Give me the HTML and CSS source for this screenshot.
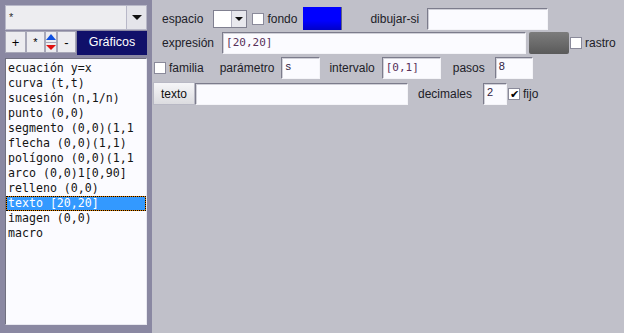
FILE: index.html
```html
<!DOCTYPE html>
<html lang="es">
<head>
    <meta charset="UTF-8">
    <title>Gráficos</title>
    <link rel="stylesheet" href="styles.css">
</head>
<body>
    <div class="app">
        <aside class="side">
            <div class="combo">
                <div class="combo-value">*</div>
                <div class="combo-arrow"><span class="tri-down"></span></div>
            </div>
            <div class="tools">
                <button class="tool">+</button>
                <button class="tool tool-star">*</button>
                <div class="updown">
                    <span class="ud"><span class="tri-up"></span></span>
                    <span class="ud"><span class="tri-down red"></span></span>
                </div>
                <button class="tool tool-minus">-</button>
                <div class="tab">Gráficos</div>
            </div>
            <ul class="list">
                <li>ecuación y=x</li>
                <li>curva (t,t)</li>
                <li>sucesión (n,1/n)</li>
                <li>punto (0,0)</li>
                <li>segmento (0,0)(1,1</li>
                <li>flecha (0,0)(1,1)</li>
                <li>polígono (0,0)(1,1</li>
                <li>arco (0,0)1[0,90]</li>
                <li>relleno (0,0)</li>
                <li class="selected">texto [20,20]</li>
                <li>imagen (0,0)</li>
                <li>macro</li>
            </ul>
        </aside>
        <main class="main">
            <div class="row row1">
                <span class="lbl lbl-first">espacio</span>
                <div class="mini-combo">
                    <span class="mini-field"></span>
                    <span class="mini-arrow"><span class="tri-down small"></span></span>
                </div>
                <span class="check ck-fondo"></span>
                <span class="lbl lbl-tight">fondo</span>
                <span class="swatch"></span>
                <span class="lbl lbl-dibujar">dibujar-si</span>
                <input class="field f-dibujar" type="text">
            </div>
            <div class="row row2">
                <span class="lbl lbl-first">expresión</span>
                <div class="field f-expr mono">[20,20]</div>
                <span class="graybox"></span>
                <span class="check ck-rastro"></span>
                <span class="lbl lbl-tight">rastro</span>
            </div>
            <div class="row row3">
                <span class="check ck-familia"></span>
                <span class="lbl lbl-tight">familia</span>
                <span class="lbl lbl-param">parámetro</span>
                <div class="field f-param small-txt">s</div>
                <span class="lbl lbl-interv">intervalo</span>
                <div class="field f-interv mono">[0,1]</div>
                <span class="lbl lbl-pasos">pasos</span>
                <div class="field f-pasos small-txt">8</div>
            </div>
            <div class="row row4">
                <button class="btn-texto">texto</button>
                <input class="field f-texto" type="text">
                <span class="lbl lbl-dec">decimales</span>
                <div class="field f-dec small-txt">2</div>
                <span class="check checked ck-fijo">&#10004;</span>
                <span class="lbl lbl-tight">fijo</span>
            </div>
        </main>
    </div>
</body>
</html>
```

FILE: styles.css
```css
body {
    margin: 0;
    padding: 0;
    font-family: "Liberation Sans", Arial, sans-serif;
    font-size: 12px;
    color: #202028;
}
.app {
    display: flex;
    width: 624px;
    height: 333px;
    overflow: hidden;
}
.side {
    width: 142px;
    padding: 5px 5px 0 5px;
    background: #8a88a2;
}
.main {
    flex: 1;
    background: #c0c0c9;
    padding: 7px 0 0 1px;
}

/* left column */
.combo {
    display: flex;
    height: 25px;
}
.combo-value {
    flex: 1;
    background: #ededf0;
    border: 1px solid #b8b8c8;
    font-size: 11px;
    padding: 5px 0 0 3px;
    color: #303030;
}
.combo-arrow {
    width: 19px;
    background: #e4e4ea;
    border: 1px solid #b8b8c8;
    border-left: none;
    display: flex;
    align-items: center;
    justify-content: center;
}
.tri-down {
    width: 0;
    height: 0;
    border-left: 5px solid transparent;
    border-right: 5px solid transparent;
    border-top: 5px solid #101010;
}
.tri-down.small {
    border-left-width: 4px;
    border-right-width: 4px;
    border-top-width: 4px;
}
.tri-down.red {
    border-top-color: #e01010;
}
.tri-up {
    width: 0;
    height: 0;
    border-left: 5px solid transparent;
    border-right: 5px solid transparent;
    border-bottom: 6px solid #1050e0;
}
.tools {
    display: flex;
    margin-top: 1px;
    height: 24px;
}
.tool {
    width: 21px;
    height: 22px;
    padding: 0;
    margin: 0;
    background: #ececf0;
    border: 1px solid #a8a8b8;
    font-family: "Liberation Sans", Arial, sans-serif;
    font-size: 13px;
    color: #000;
}
.tool-star {
    width: 19px;
    font-size: 11px;
}
.tool-minus {
    width: 19px;
}
.updown {
    width: 12px;
    height: 22px;
    display: flex;
    flex-direction: column;
}
.ud {
    flex: 1;
    background: #ececf0;
    border: 1px solid #a8a8b8;
    display: flex;
    align-items: center;
    justify-content: center;
}
.ud + .ud {
    border-top: none;
}
.tab {
    flex: 1;
    margin-left: 1px;
    background: #10106a;
    color: #fff;
    font-size: 12.5px;
    text-align: center;
    line-height: 22px;
}
.list {
    list-style: none;
    margin: 3px 0 0 0;
    padding: 2px 0 0 0;
    height: 263px;
    background: #fbfbff;
    border: 1px solid #707080;
    border-right-color: #e8e8f0;
    border-bottom-color: #e8e8f0;
    font-family: "DejaVu Sans Mono", "Liberation Mono", monospace;
    font-size: 11.6px;
    color: #141414;
}
.list li {
    height: 15px;
    line-height: 15px;
    padding-left: 2px;
    white-space: nowrap;
    overflow: hidden;
}
.list li.selected {
    color: #fff;
    border: 1px dotted #000;
    background: linear-gradient(#3399ff, #3399ff) padding-box, #e08000 border-box;
    height: 13px;
    line-height: 13px;
    padding-left: 1px;
}

/* right side */
.row {
    display: flex;
    align-items: center;
}
.row1 {
    height: 23px;
}
.row2 {
    height: 22px;
    margin-top: 2px;
}
.row3 {
    height: 22px;
    margin-top: 3px;
}
.row4 {
    height: 23px;
    margin-top: 3px;
}
.lbl {
    white-space: nowrap;
}
.lbl-first {
    margin-left: 9px;
}
.lbl-tight {
    margin-left: 3px;
}
.lbl-dibujar {
    margin-left: 28px;
}
.lbl-param {
    margin-left: 16px;
}
.lbl-interv {
    margin-left: 9px;
}
.lbl-pasos {
    margin-left: 12px;
}
.lbl-dec {
    margin-left: 10px;
}
.mini-combo {
    display: flex;
    margin-left: 10px;
    width: 34px;
    height: 18px;
    border: 1px solid #808090;
    box-sizing: border-box;
    background: #fff;
}
.mini-field {
    flex: 1;
}
.mini-arrow {
    width: 14px;
    background: #e8e8ee;
    border-left: 1px solid #b0b0c0;
    display: flex;
    align-items: center;
    justify-content: center;
}
.check {
    width: 12px;
    height: 12px;
    box-sizing: border-box;
    background: #fff;
    border: 1px solid #8a8a9a;
    font-size: 11px;
    line-height: 10px;
    text-align: center;
    color: #000;
}
.ck-fondo {
    margin-left: 5px;
}
.ck-rastro {
    margin-left: 1px;
}
.ck-familia {
    margin-left: 1px;
}
.ck-fijo {
    margin-left: 1px;
}
.swatch {
    width: 39px;
    height: 23px;
    margin-left: 6px;
    background: linear-gradient(#0000ff 60%, #0000c8);
    border-right: 1px solid #606080;
    box-sizing: border-box;
}
.field {
    box-sizing: border-box;
    height: 22px;
    margin: 0;
    background: #fbfbff;
    border: 1px solid #7c7c8c;
    border-right-color: #f4f4f8;
    border-bottom-color: #f4f4f8;
    box-shadow: inset 1px 1px 0 #d0d0d8;
    font-family: "Liberation Sans", Arial, sans-serif;
}
.f-dibujar {
    width: 121px;
    margin-left: 8px;
}
.mono {
    font-family: "DejaVu Sans Mono", "Liberation Mono", monospace;
    font-size: 11px;
    color: #58305a;
    line-height: 20px;
    padding-left: 3px;
}
.small-txt {
    font-size: 11px;
    color: #302040;
    padding: 2px 0 0 3px;
}
.f-expr {
    width: 304px;
    margin-left: 8px;
}
.graybox {
    width: 40px;
    height: 22px;
    margin-left: 3px;
    border-radius: 2px;
    background: linear-gradient(#7c7c7c, #686868 60%, #5a5a5a);
}
.f-param {
    width: 39px;
    margin-left: 7px;
}
.f-interv {
    width: 59px;
    margin-left: 7px;
}
.f-pasos {
    width: 38px;
    margin-left: 10px;
}
.btn-texto {
    width: 42px;
    height: 23px;
    padding: 0;
    margin: 0;
    background: linear-gradient(#f6f6f8, #dcdce0);
    border: 1px solid #b8b8c4;
    font-family: "Liberation Sans", Arial, sans-serif;
    font-size: 12px;
    color: #101010;
}
.f-texto {
    width: 213px;
}
.f-dec {
    width: 24px;
    margin-left: 11px;
}
```
